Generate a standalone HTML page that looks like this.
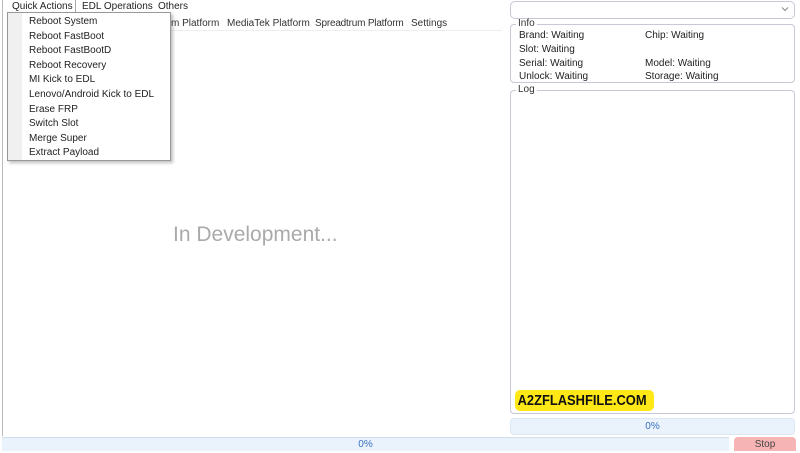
<!DOCTYPE html>
<html><head><meta charset="utf-8"><style>
*{margin:0;padding:0;box-sizing:border-box}
body{width:800px;height:450px;background:#fff;font-family:"Liberation Sans",sans-serif;font-size:10px;color:#222;position:relative;overflow:hidden}
.a{position:absolute;white-space:nowrap}
.box{position:absolute;border:1px solid #c8c8d8;border-radius:4px}
.lg{position:absolute;background:#fff;padding:0 2px;color:#333;font-size:10px;line-height:10px}
</style></head><body>
<div class="a" style="left:2px;top:0;width:1px;height:436px;background:#bbb"></div>
<div class="a" style="left:12px;top:1px">Quick Actions</div>
<div class="a" style="left:75px;top:0;width:1px;height:12px;background:#aaa"></div>
<div class="a" style="left:82px;top:1px">EDL Operations</div>
<div class="a" style="left:158px;top:1px">Others</div>
<div class="a" style="left:8px;top:30px;width:494px;height:1px;background:#eee"></div>
<div class="a" style="left:171px;top:18px;color:#333">m Platform</div>
<div class="a" style="left:227px;top:18px;color:#333">MediaTek Platform</div>
<div class="a" style="left:315px;top:18px;color:#333;letter-spacing:-0.2px">Spreadtrum Platform</div>
<div class="a" style="left:411px;top:18px;color:#333">Settings</div>
<div class="a" style="left:7px;top:12px;width:164px;height:149px;background:#fff;border:1px solid #999;box-shadow:2px 2px 3px rgba(0,0,0,.25)">
<div style="position:absolute;left:0;top:0;width:14px;height:100%;background:#f0f0f0"></div>
<div style="position:absolute;left:21px;top:2px;line-height:14.6px;font-size:10px">Reboot System<br>Reboot FastBoot<br>Reboot FastBootD<br>Reboot Recovery<br>MI Kick to EDL<br>Lenovo/Android Kick to EDL<br>Erase FRP<br>Switch Slot<br>Merge Super<br>Extract Payload</div>
</div>
<div class="a" style="left:173px;top:223px;font-size:21px;color:#aaa">In Development...</div>
<div class="box" style="left:510px;top:1px;width:285px;height:18px;border-radius:5px"></div>
<svg class="a" style="left:781px;top:6px" width="8" height="6"><path d="M1 1.5 L4 4.5 L7 1.5" fill="none" stroke="#888" stroke-width="1"/></svg>
<div class="box" style="left:510px;top:24px;width:285px;height:59px"></div>
<div class="lg" style="left:516px;top:19px">Info</div>
<div class="a" style="left:519px;top:30px">Brand: Waiting</div>
<div class="a" style="left:645px;top:30px">Chip: Waiting</div>
<div class="a" style="left:519px;top:44px">Slot: Waiting</div>
<div class="a" style="left:519px;top:58px">Serial: Waiting</div>
<div class="a" style="left:645px;top:58px">Model: Waiting</div>
<div class="a" style="left:519px;top:71px">Unlock: Waiting</div>
<div class="a" style="left:645px;top:71px">Storage: Waiting</div>
<div class="box" style="left:510px;top:90px;width:285px;height:324px"></div>
<div class="lg" style="left:516px;top:85px">Log</div>
<div class="a" style="left:515px;top:390px;width:139px;height:21px;background:#ffe815;border-radius:5px;overflow:hidden"><div style="font-weight:bold;font-size:15px;line-height:21px;color:#111;transform:scaleX(0.86);transform-origin:0 0;padding-left:3px">A2ZFLASHFILE.COM</div></div>
<div class="a" style="left:510px;top:418px;width:285px;height:17px;background:#eaf3fc;border-radius:4px;border:1px solid #dde8f5;text-align:center;line-height:15px;color:#3a6fbf">0%</div>
<div class="a" style="left:2px;top:437px;width:727px;height:14px;background:#eaf3fc;border-top:1px solid #cfddef;text-align:center;line-height:14px;color:#3a6fbf">0%</div>
<div class="a" style="left:734px;top:437px;width:62px;height:14px;background:#f7b4b4;border-radius:4px 4px 0 0;text-align:center;line-height:16px;color:#444">Stop</div>
</body></html>
